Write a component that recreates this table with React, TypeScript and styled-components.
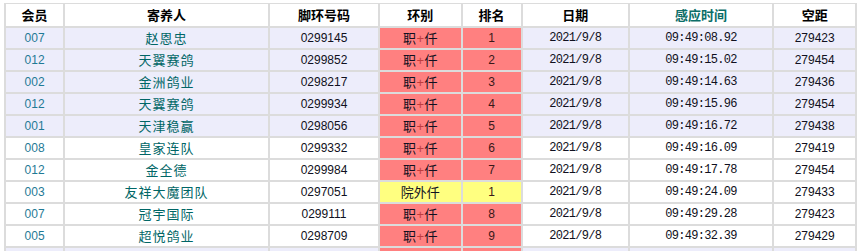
import React from "react";
import styled, { createGlobalStyle } from "styled-components";

const Global = createGlobalStyle`
  html, body { margin: 0; padding: 0; background: #ffffff; }
  body { font-family: "Liberation Sans", Arial, sans-serif; }
`;

const Page = styled.div`
  padding: 3px 0 0 4px;
  width: 857px;
  height: 251px;
  box-sizing: border-box;
  overflow: hidden;
`;

const Table = styled.table`
  border-collapse: separate;
  border-spacing: 0;
  table-layout: fixed;
  width: 853px;
  border-top: 1px solid #dcdcdc;
  border-left: 2px solid #dcdcdc;
`;

const widths = [60, 203, 110, 83, 61, 107, 144, 83];

const HeadCell = styled.th<{ $accent?: boolean }>`
  height: 22px;
  padding: 0;
  background: #ffffff;
  border-right: 2px solid #dcdcdc;
  border-bottom: 2px solid #dcdcdc;
  font-family: "Noto Sans CJK SC", sans-serif;
  font-size: 13px;
  font-weight: 700;
  text-align: center;
  vertical-align: middle;
  color: ${(p) => (p.$accent ? "#0b6e68" : "#000000")};
  box-sizing: content-box;
`;

const HeadText = styled.div`
  height: 22px;
  line-height: 22px;
  overflow: hidden;
`;

type Kind = "member" | "name" | "num" | "mono" | "ring" | "rank";

const Cell = styled.td<{ $bg: string }>`
  padding: 0;
  background: ${(p) => p.$bg};
  border-right: 2px solid #dcdcdc;
  border-bottom: 2px solid #dcdcdc;
  text-align: center;
  vertical-align: middle;
  box-sizing: content-box;
`;

const CellText = styled.div<{ $kind: Kind }>`
  height: 20px;
  line-height: 20px;
  overflow: hidden;
  white-space: nowrap;
  font-size: ${(p) =>
    p.$kind === "name" || p.$kind === "ring" ? "13px" : "12px"};
  letter-spacing: ${(p) =>
    p.$kind === "mono" ? "-0.7px" : p.$kind === "name" ? "1px" : "0"};
  font-family: ${(p) =>
    p.$kind === "name" || p.$kind === "ring"
      ? `"Noto Sans CJK SC", sans-serif`
      : p.$kind === "mono"
      ? `"Liberation Mono", monospace`
      : `"Liberation Sans", Arial, sans-serif`};
  color: ${(p) =>
    p.$kind === "member"
      ? "#1f7a96"
      : p.$kind === "name"
      ? "#006666"
      : p.$kind === "rank"
      ? "#3a1818"
      : "#101020"};
`;

const Plus = styled.span`
  color: #c03c3c;
  font-family: "Liberation Sans", Arial, sans-serif;
  font-size: 13px;
  line-height: 0;
  padding: 0 0.5px;
`;

type Row = {
  m: string;
  name: string;
  ring: string;
  type: "职+仟" | "院外仟";
  rank: string;
  date: string;
  time: string;
  dist: string;
  hl: boolean;
};

const rows: Row[] = [
  { m: "007", name: "赵恩忠", ring: "0299145", type: "职+仟", rank: "1", date: "2021/9/8", time: "09:49:08.92", dist: "279423", hl: true },
  { m: "012", name: "天翼赛鸽", ring: "0299852", type: "职+仟", rank: "2", date: "2021/9/8", time: "09:49:15.02", dist: "279454", hl: true },
  { m: "002", name: "金洲鸽业", ring: "0298217", type: "职+仟", rank: "3", date: "2021/9/8", time: "09:49:14.63", dist: "279436", hl: true },
  { m: "012", name: "天翼赛鸽", ring: "0299934", type: "职+仟", rank: "4", date: "2021/9/8", time: "09:49:15.96", dist: "279454", hl: true },
  { m: "001", name: "天津稳赢", ring: "0298056", type: "职+仟", rank: "5", date: "2021/9/8", time: "09:49:16.72", dist: "279438", hl: true },
  { m: "008", name: "皇家连队", ring: "0299332", type: "职+仟", rank: "6", date: "2021/9/8", time: "09:49:16.09", dist: "279419", hl: false },
  { m: "012", name: "金全德", ring: "0299984", type: "职+仟", rank: "7", date: "2021/9/8", time: "09:49:17.78", dist: "279454", hl: false },
  { m: "003", name: "友祥大魔团队", ring: "0297051", type: "院外仟", rank: "1", date: "2021/9/8", time: "09:49:24.09", dist: "279433", hl: false },
  { m: "007", name: "冠宇国际", ring: "0299111", type: "职+仟", rank: "8", date: "2021/9/8", time: "09:49:29.28", dist: "279423", hl: false },
  { m: "005", name: "超悦鸽业", ring: "0298709", type: "职+仟", rank: "9", date: "2021/9/8", time: "09:49:32.39", dist: "279429", hl: false },
  { m: "", name: "", ring: "", type: "职+仟", rank: "", date: "", time: "", dist: "", hl: true },
];

const headers = ["会员", "寄养人", "脚环号码", "环别", "排名", "日期", "感应时间", "空距"];

export default function App() {
  return (
    <Page>
      <Global />
      <Table>
        <colgroup>
          {widths.map((w, i) => (
            <col key={i} style={{ width: w - 2 }} />
          ))}
        </colgroup>
        <thead>
          <tr>
            {headers.map((h) => (
              <HeadCell key={h} $accent={h === "感应时间"}>
                <HeadText>{h}</HeadText>
              </HeadCell>
            ))}
          </tr>
        </thead>
        <tbody>
          {rows.map((r, i) => {
            const bg = r.hl ? "#ededfb" : "#ffffff";
            const tag = r.type === "院外仟" ? "#ffff80" : "#ff8080";
            return (
              <tr key={i}>
                <Cell $bg={bg}><CellText $kind="member">{r.m}</CellText></Cell>
                <Cell $bg={bg}><CellText $kind="name">{r.name}</CellText></Cell>
                <Cell $bg={bg}><CellText $kind="num">{r.ring}</CellText></Cell>
                <Cell $bg={tag}>
                  <CellText $kind="ring">
                    {r.m === "" ? "" : r.type === "职+仟" ? (
                      <>
                        职<Plus>+</Plus>仟
                      </>
                    ) : (
                      r.type
                    )}
                  </CellText>
                </Cell>
                <Cell $bg={tag}><CellText $kind="rank">{r.rank}</CellText></Cell>
                <Cell $bg={bg}><CellText $kind="mono">{r.date}</CellText></Cell>
                <Cell $bg={bg}><CellText $kind="mono">{r.time}</CellText></Cell>
                <Cell $bg={bg}><CellText $kind="num">{r.dist}</CellText></Cell>
              </tr>
            );
          })}
        </tbody>
      </Table>
    </Page>
  );
}
